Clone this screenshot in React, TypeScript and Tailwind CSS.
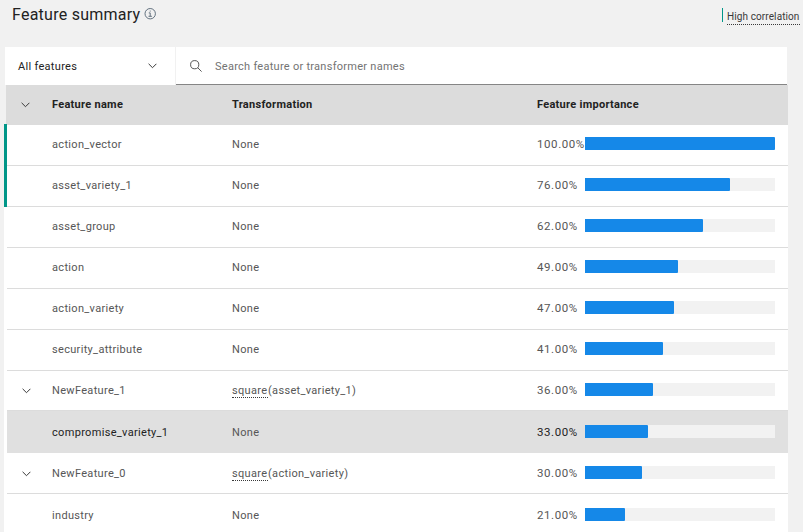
import React from "react";

type Row = {
  name: string;
  fn?: string;
  arg?: string;
  pct: number;
  bar: string;
  size: string;
  expandable?: boolean;
  selected?: boolean;
};

const rows: Row[] = [
  { name: "action_vector", pct: 100, bar: "w-[190px]", size: "h-[41px] pt-3" },
  { name: "asset_variety_1", pct: 76, bar: "w-[145px]", size: "h-[41px] pt-3" },
  { name: "asset_group", pct: 62, bar: "w-[118px]", size: "h-[41px] pt-3" },
  { name: "action", pct: 49, bar: "w-[93px]", size: "h-[41px] pt-3" },
  { name: "action_variety", pct: 47, bar: "w-[89px]", size: "h-[41px] pt-3" },
  { name: "security_attribute", pct: 41, bar: "w-[78px]", size: "h-[41px] pt-3" },
  { name: "NewFeature_1", fn: "square", arg: "(asset_variety_1)", pct: 36, bar: "w-[68px]", size: "h-10 pt-3", expandable: true },
  { name: "compromise_variety_1", pct: 33, bar: "w-[63px]", size: "h-[42px] pt-3.5", selected: true },
  { name: "NewFeature_0", fn: "square", arg: "(action_variety)", pct: 30, bar: "w-[57px]", size: "h-[41px] pt-[13px]", expandable: true },
  { name: "industry", pct: 21, bar: "w-10", size: "h-[41px] pt-3.5" },
];

function Chevron() {
  return (
    <svg width="9" height="6" viewBox="0 0 9 6" fill="none" stroke="#393939" strokeWidth="1">
      <path d="M0.6 0.8 4.5 4.7 8.4 0.8" />
    </svg>
  );
}

function FeatureRow({ row }: { row: Row }) {
  return (
    <div
      className={`ml-[3px] flex items-start border-b ${row.size} ${
        row.selected ? "border-[#e0e0e0] bg-[#e0e0e0] text-[#222]" : "border-[#dcdcdc] text-[#565656]"
      }`}
    >
      <div className="flex h-[15px] w-[45px] items-center pl-[15px]">{row.expandable && <Chevron />}</div>
      <div className="w-[180px] leading-[15px] tracking-[0.32px]">{row.name}</div>
      <div className="flex w-[305px] leading-[15px] tracking-[0.32px] text-[#565656]">
        {row.fn ? (
          <>
            <span className="h-[15px] w-9 border-b border-dotted border-[#393939]">{row.fn}</span>
            <span>{row.arg}</span>
          </>
        ) : (
          <span>None</span>
        )}
      </div>
      <div className="w-12 text-[11.5px] leading-[15px] tracking-[0.58px] whitespace-nowrap">
        {row.pct.toFixed(2)}%
      </div>
      <div className="h-[13px] w-[190px] bg-[#f2f2f2]">
        <div className={`h-full rounded-r-[1px] bg-[#1588e8] ${row.bar}`} />
      </div>
    </div>
  );
}

export default function App() {
  return (
    <div className="h-[532px] w-[803px] overflow-hidden bg-[#f1f1f1] font-['Roboto','Liberation_Sans',sans-serif] text-[11px] text-[#222]">
      <header className="flex h-[47px] items-start justify-between pl-3 pr-[3px]">
        <div className="flex items-start pt-[5px]">
          <h1 className="w-[132px] text-[16px] leading-5 tracking-[0.25px] whitespace-nowrap">Feature summary</h1>
          <svg className="mt-[3px]" width="12" height="12" viewBox="0 0 12 12" fill="none" stroke="#526373" strokeWidth="0.9">
            <circle cx="6.2" cy="5.7" r="5.2" />
            <path d="M4.8 4.9h1.4v3.3M4.5 8.3h3.4" />
            <circle cx="6.2" cy="3" r="0.6" fill="#526373" stroke="none" />
          </svg>
        </div>
        <div className="flex items-start pt-2">
          <span className="mr-1 h-3.5 w-px bg-[#009688]" />
          <span className="mt-0.5 h-[15px] w-[73px] border-b border-dotted border-[#393939] text-[10px] leading-[13px] tracking-[0.1px] whitespace-nowrap text-[#393939]">
            High correlation
          </span>
        </div>
      </header>

      <div className="ml-[5px] flex h-[38px] w-[782px] gap-px">
        <div className="flex w-[170px] items-center justify-between bg-white pl-[13px] pr-[18px] tracking-[0.3px]">
          <span className="pt-0.5 leading-4">All features</span>
          <Chevron />
        </div>
        <div className="flex flex-1 items-center border-b border-[#858585] bg-white pl-3.5">
          <svg width="12" height="12" viewBox="0 0 12 12" fill="none" stroke="#444" strokeWidth="0.9">
            <circle cx="4.7" cy="4.7" r="4.1" />
            <path d="m7.8 7.8 3.8 3.8" />
          </svg>
          <span className="ml-[13px] pt-[3px] leading-4 tracking-[0.27px] text-[#737373]">
            Search feature or transformer names
          </span>
        </div>
      </div>

      <main className="relative ml-1 w-[784px] bg-white">
        <div className="flex h-10 items-center border-l-2 border-[#f1f1f1] bg-[#dcdcdc] pb-px font-bold leading-4 tracking-[0.28px]">
          <div className="w-[46px] pl-[15px]">
            <Chevron />
          </div>
          <div className="w-[180px] pt-px">Feature name</div>
          <div className="w-[305px] pt-px">Transformation</div>
          <div className="pt-px">Feature importance</div>
        </div>
        {rows.map((row) => (
          <FeatureRow key={row.name} row={row} />
        ))}
        <div className="absolute left-0 top-[39px] h-[83px] w-[3px] bg-[#009688]" />
      </main>
    </div>
  );
}
